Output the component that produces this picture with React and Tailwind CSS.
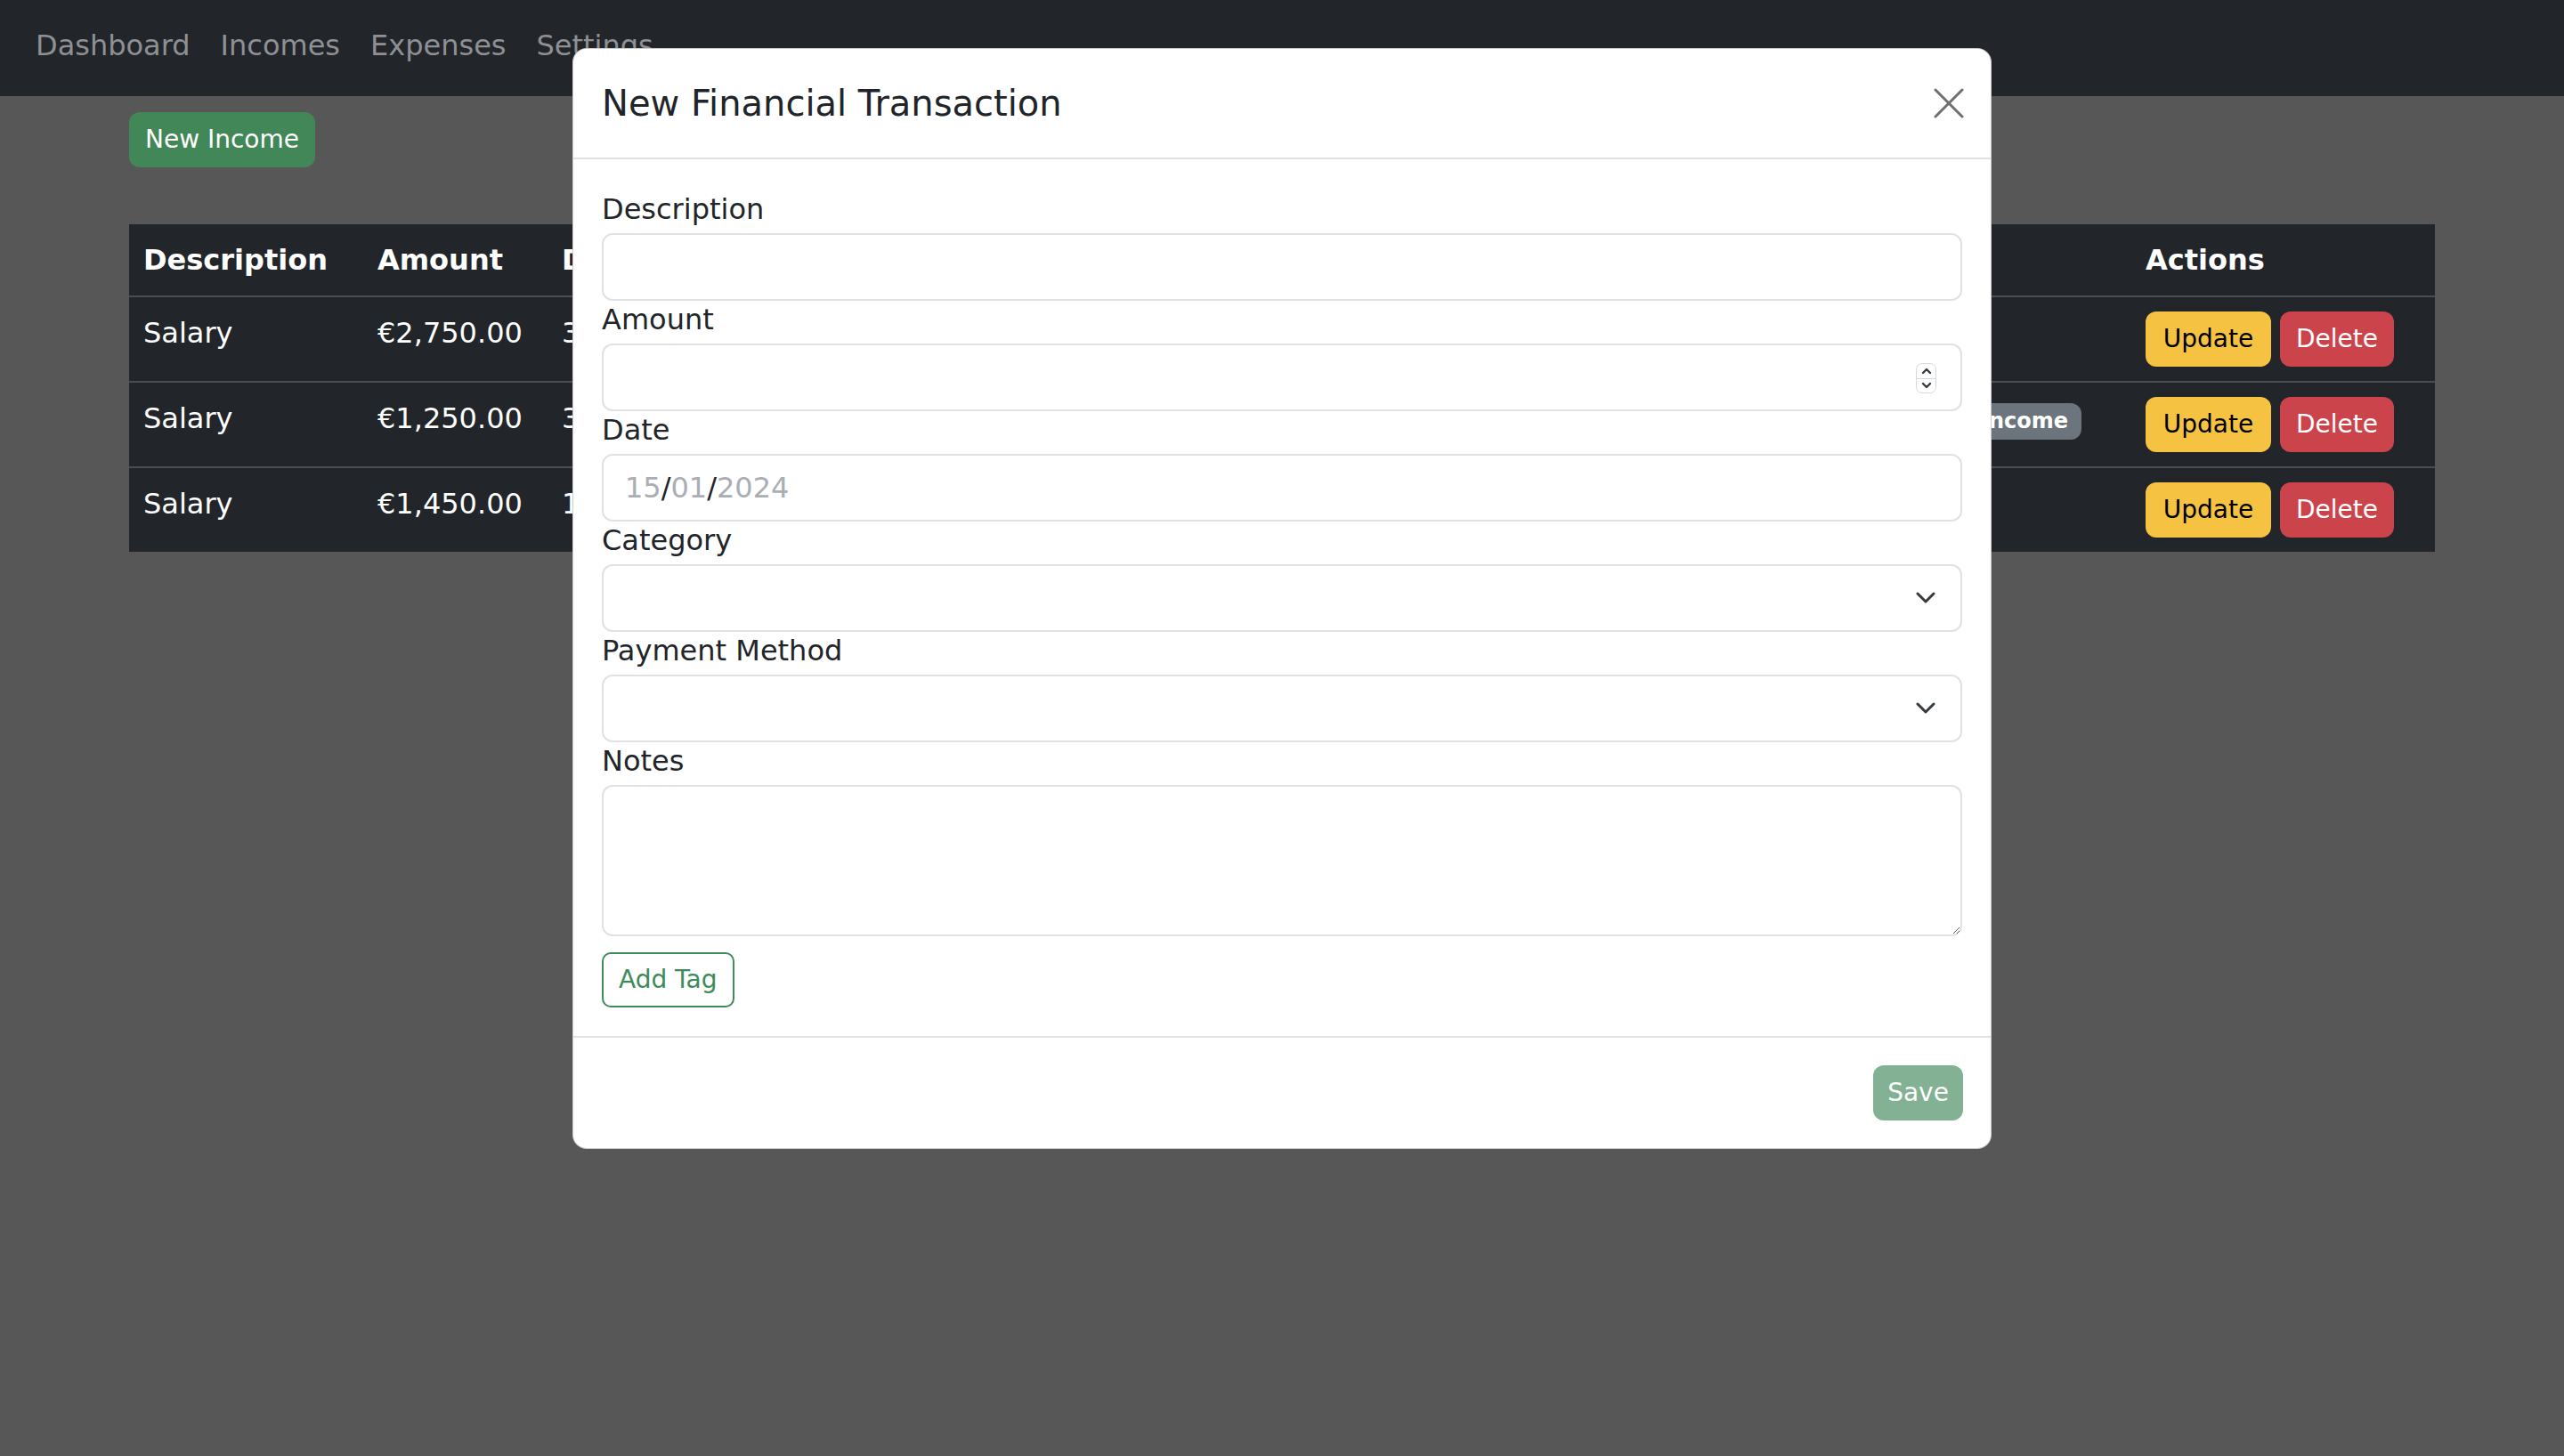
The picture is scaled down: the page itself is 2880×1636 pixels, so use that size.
import React from "react";

const rows = [
  { desc: "Salary", amount: "€2,750.00", date: "31/01/2024", category: "Work", method: "Bank Transfer", notes: "", tag: false },
  { desc: "Salary", amount: "€1,250.00", date: "30/12/2023", category: "Work", method: "Bank Transfer", notes: "", tag: true },
  { desc: "Salary", amount: "€1,450.00", date: "15/11/2023", category: "Work", method: "Bank Transfer", notes: "", tag: false },
];

function Chevron() {
  return (
    <svg width="22" height="14" viewBox="0 0 22 14" className="absolute right-[30px] top-1/2 -translate-y-1/2 pointer-events-none">
      <polyline points="2,2 11,11 20,2" fill="none" stroke="#343a40" strokeWidth="3" strokeLinecap="round" strokeLinejoin="round" />
    </svg>
  );
}

function Spinner() {
  return (
    <div className="absolute right-[29px] top-[22px] w-[23px] h-[34px] rounded-[7px] border border-[#d6d9dc] bg-white flex flex-col">
      <div className="flex-1 flex items-center justify-center border-b border-[#d6d9dc]">
        <svg width="12" height="8" viewBox="0 0 12 8">
          <polyline points="2,6 6,2 10,6" fill="none" stroke="#343a40" strokeWidth="2.4" strokeLinecap="round" strokeLinejoin="round" />
        </svg>
      </div>
      <div className="flex-1 flex items-center justify-center">
        <svg width="12" height="8" viewBox="0 0 12 8">
          <polyline points="2,2 6,6 10,2" fill="none" stroke="#343a40" strokeWidth="2.4" strokeLinecap="round" strokeLinejoin="round" />
        </svg>
      </div>
    </div>
  );
}

function Field({ label, children }) {
  return (
    <div className="flex flex-col">
      <label className="text-[32px] leading-[42px] mb-[6px] text-[#212529]">{label}</label>
      {children}
    </div>
  );
}

const inputCls =
  "w-full h-[76px] rounded-[12px] border-2 border-[#dee2e6] bg-white px-[24px] text-[32px] text-[#212529] outline-none";

export default function App() {
  return (
    <div className="relative min-h-[1636px] bg-[#575757] font-['DejaVu_Sans',sans-serif]">
      <nav className="h-[108px] bg-[#222529] flex items-center gap-[34px] px-[40px] pb-[6px] text-[32px] text-[#8e9094]">
        <a>Dashboard</a>
        <a>Incomes</a>
        <a>Expenses</a>
        <a>Settings</a>
      </nav>

      <main className="px-[145px] pt-[18px]">
        <button className="h-[62px] px-[18px] rounded-[12px] bg-[#428757] text-white text-[28px]">
          New Income
        </button>

        <table className="mt-[64px] w-full table-fixed bg-[#222529] text-white text-[32px] leading-[48px] align-top">
          <colgroup>
            <col className="w-[263px]" />
            <col className="w-[207px]" />
            <col className="w-[360px]" />
            <col className="w-[300px]" />
            <col className="w-[460px]" />
            <col className="w-[459px]" />
            <col className="w-[200px]" />
            <col className="w-[341px]" />
          </colgroup>
          <thead>
            <tr className="border-b-2 border-[#4b4f52]">
              <th className="p-[16px] text-left font-bold">Description</th>
              <th className="p-[16px] text-left font-bold">Amount</th>
              <th className="p-[16px] text-left font-bold">Date</th>
              <th className="p-[16px] text-left font-bold">Category</th>
              <th className="p-[16px] text-left font-bold">Payment</th>
              <th className="p-[16px] text-left font-bold">Notes</th>
              <th className="p-[16px] text-left font-bold"></th>
              <th className="p-[16px] text-left font-bold">Actions</th>
            </tr>
          </thead>
          <tbody>
            {rows.map((r, i) => (
              <tr key={i} className={i < rows.length - 1 ? "border-b-2 border-[#4b4f52]" : ""}>
                <td className="p-[16px] align-top">{r.desc}</td>
                <td className="p-[16px] align-top">{r.amount}</td>
                <td className="p-[16px] align-top">{r.date}</td>
                <td className="p-[16px] align-top">{r.category}</td>
                <td className="p-[16px] align-top">{r.method}</td>
                <td className="p-[16px] align-top">{r.notes}</td>
                <td className="p-[16px] align-top">
                  {r.tag && (
                    <span className="inline-block mt-[7px] h-[41px] px-[15px] rounded-[12px] bg-[#6c757d] text-[24px] leading-[41px] font-bold text-white">
                      Income
                    </span>
                  )}
                </td>
                <td className="p-[16px] align-top">
                  <div className="flex gap-[10px]">
                    <button className="w-[141px] h-[62px] rounded-[12px] bg-[#f5c242] text-black text-[28px]">Update</button>
                    <button className="w-[128px] h-[62px] rounded-[12px] bg-[#cc444b] text-white text-[28px]">Delete</button>
                  </div>
                </td>
              </tr>
            ))}
          </tbody>
        </table>
      </main>

      <div className="absolute inset-0 flex justify-center items-start pt-[54px]">
        <div className="w-[1594px] bg-white rounded-[16px] border border-black/20">
          <div className="flex items-center justify-between px-[32px] py-[31px] border-b-2 border-[#dee2e6]">
            <h5 className="text-[40px] leading-[60px] text-[#212529]">New Financial Transaction</h5>
            <button className="w-[34px] h-[34px] mr-[-2px]">
              <svg width="34" height="34" viewBox="0 0 34 34">
                <line x1="2" y1="2" x2="32" y2="32" stroke="#6f6f6f" strokeWidth="3" strokeLinecap="round" />
                <line x1="32" y1="2" x2="2" y2="32" stroke="#6f6f6f" strokeWidth="3" strokeLinecap="round" />
              </svg>
            </button>
          </div>

          <div className="px-[32px] pt-[35px] pb-[32px] flex flex-col">
            <Field label="Description">
              <input type="text" className={inputCls} />
            </Field>
            <Field label="Amount">
              <div className="relative">
                <input type="text" className={inputCls} />
                <Spinner />
              </div>
            </Field>
            <Field label="Date">
              <div className={inputCls + " flex items-center"}>
                <span className="text-[#a9aeb4]">15</span>
                <span>/</span>
                <span className="text-[#a9aeb4]">01</span>
                <span>/</span>
                <span className="text-[#a9aeb4]">2024</span>
              </div>
            </Field>
            <Field label="Category">
              <div className="relative">
                <select className={inputCls + " appearance-none"}>
                  <option></option>
                </select>
                <Chevron />
              </div>
            </Field>
            <Field label="Payment Method">
              <div className="relative">
                <select className={inputCls + " appearance-none"}>
                  <option></option>
                </select>
                <Chevron />
              </div>
            </Field>
            <Field label="Notes">
              <textarea className="w-full h-[170px] rounded-[12px] border-2 border-[#dee2e6] bg-white px-[24px] py-[12px] text-[32px] outline-none block" />
            </Field>
            <div className="mt-[18px]">
              <button className="h-[62px] px-[17px] rounded-[10px] border-2 border-[#3d8a5a] text-[#3d8a5a] text-[28px]">
                Add Tag
              </button>
            </div>
          </div>

          <div className="flex justify-end px-[31px] py-[31px] border-t-2 border-[#dee2e6]">
            <button className="h-[62px] w-[101px] rounded-[12px] bg-[#82b193] text-white text-[28px]">Save</button>
          </div>
        </div>
      </div>
    </div>
  );
}
